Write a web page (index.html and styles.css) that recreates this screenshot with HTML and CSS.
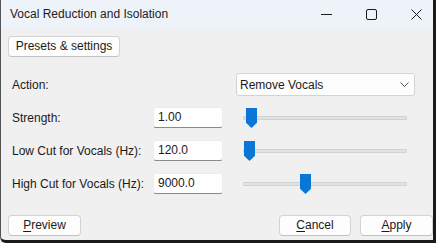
FILE: index.html
```html
<!DOCTYPE html>
<html>
<head>
<meta charset="utf-8">
<link rel="stylesheet" href="styles.css">
</head>
<body>
<div class="window">
  <div class="titlebar">
    <span class="title">Vocal Reduction and Isolation</span>
    <div class="controls">
      <svg class="ctl" width="11" height="11" viewBox="0 0 11 11"><path d="M0 5.5H11" stroke="#1a1a1a" stroke-width="1" fill="none"/></svg>
      <svg class="ctl" width="11" height="11" viewBox="0 0 11 11"><rect x="0.5" y="0.5" width="10" height="10" rx="1.5" stroke="#1a1a1a" stroke-width="1" fill="none"/></svg>
      <svg class="ctl" width="11" height="11" viewBox="0 0 11 11"><path d="M0.5 0.5L10.5 10.5M10.5 0.5L0.5 10.5" stroke="#1a1a1a" stroke-width="1" fill="none"/></svg>
    </div>
  </div>
  <div class="content">
    <div class="top">
      <button class="btn presets">Presets &amp; settings</button>
    </div>
    <div class="form">
      <div class="row action">
        <span class="label">Action:</span>
        <div class="select">
          <span>Remove Vocals</span>
          <svg width="9" height="5" viewBox="0 0 9 5"><path d="M0.5 0.5L4.5 4.5L8.5 0.5" stroke="#505050" stroke-width="1" fill="none"/></svg>
        </div>
      </div>
      <div class="row">
        <span class="label">Strength:</span>
        <div class="input">1.00</div>
        <div class="slider"><div class="track"></div><div class="thumb" style="left:3px"></div></div>
      </div>
      <div class="row">
        <span class="label">Low Cut for Vocals (Hz):</span>
        <div class="input">120.0</div>
        <div class="slider"><div class="track"></div><div class="thumb" style="left:1px"></div></div>
      </div>
      <div class="row">
        <span class="label">High Cut for Vocals (Hz):</span>
        <div class="input">9000.0</div>
        <div class="slider"><div class="track"></div><div class="thumb" style="left:57px"></div></div>
      </div>
    </div>
    <div class="footer">
      <button class="btn"><u>P</u>review</button>
      <div class="spacer"></div>
      <button class="btn cancel"><u>C</u>ancel</button>
      <button class="btn"><u>A</u>pply</button>
    </div>
  </div>
</div>
</body>
</html>
```

FILE: styles.css
```css
* { box-sizing: border-box; }
html, body {
  margin: 0;
  padding: 0;
  width: 436px;
  height: 243px;
  overflow: hidden;
  background: #f0f0f0;
}
body {
  font-family: "Liberation Sans", Arial, sans-serif;
  font-size: 12px;
  color: #1a1a1a;
}
.window {
  width: 436px;
  height: 243px;
  display: flex;
  flex-direction: column;
  background: #f0f0f0;
  border-left: 1px solid #555;
  border-right: 3px solid #1a1a1a;
  border-bottom: 3px solid #1a1a1a;
  border-bottom-left-radius: 6px;
}
.titlebar {
  height: 29px;
  flex: none;
  background: #eef2f9;
  display: flex;
  align-items: center;
  padding-left: 9px;
  padding-right: 11px;
}
.title {
  font-size: 12px;
  color: #1c1c1c;
  flex: 1;
  margin-top: -1px;
}
.controls {
  display: flex;
  gap: 34px;
  align-items: center;
}
.ctl { display: block; }
.content {
  flex: 1;
  display: flex;
  flex-direction: column;
  padding: 7px 0 0 7px;
}
.btn {
  font: inherit;
  color: #1a1a1a;
  background: #fdfdfd;
  border: 1px solid #d3d3d3;
  border-bottom-color: #c2c2c2;
  border-radius: 4px;
  height: 21px;
  width: 73px;
  padding: 0;
  line-height: 19px;
  text-align: center;
}
.btn u { text-underline-offset: 2px; }
.presets { width: 112px; }
.cancel { width: 72px; }
.top { display: flex; }
.form {
  display: flex;
  flex-direction: column;
  gap: 11px;
  margin-top: 16px;
}
.row {
  display: flex;
  align-items: center;
  height: 21px;
}
.row + .row + .row { margin-top: 1px; }
.row.action { height: 23px; }
.label {
  width: 145px;
  padding-left: 4px;
  flex: none;
}
.select {
  margin-left: auto;
  margin-right: 18px;
  width: 179px;
  height: 23px;
  background: #fdfdfd;
  border: 1px solid #d3d3d3;
  border-radius: 3px;
  display: flex;
  align-items: center;
  justify-content: space-between;
  padding: 0 5px 0 3px;
}
.select svg { display: block; }
.input {
  width: 70px;
  height: 21px;
  flex: none;
  background: #fff;
  border: 1px solid #ececec;
  border-bottom-color: #8a8a8a;
  border-radius: 3px;
  padding: 0 4px;
  line-height: 19px;
}
.slider {
  position: relative;
  width: 164px;
  height: 21px;
  margin-left: 20px;
  flex: none;
  display: flex;
  align-items: center;
}
.track {
  width: 100%;
  height: 4px;
  background: #e2e2e2;
  border: 1px solid #d2d2d2;
  border-radius: 1px;
}
.thumb {
  position: absolute;
  top: 1px;
  width: 11px;
  height: 20px;
  background: #0a77d6;
  clip-path: polygon(0 0, 100% 0, 100% 74%, 50% 100%, 0 74%);
}
.footer {
  display: flex;
  margin-top: 21px;
  gap: 9px;
}
.spacer { flex: 1; }
```
